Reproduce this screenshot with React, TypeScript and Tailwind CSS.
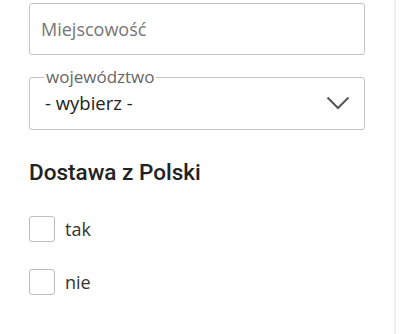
import { useState } from "react";

function Chevron() {
  return (
    <svg width="24" height="14" viewBox="0 0 24 14" fill="none" stroke="#555" strokeWidth={2}>
      <path d="M1.5 1.5 L12 12 L22.5 1.5" />
    </svg>
  );
}

function Check({ label }: { label: string }) {
  const [on, setOn] = useState(false);
  return (
    <label className="flex items-center gap-[10px] cursor-pointer select-none">
      <span
        onClick={() => setOn(!on)}
        className={`w-[26px] h-[26px] rounded-[3px] border border-[#bdbdbd] bg-white ${on ? "bg-[#333]" : ""}`}
      />
      <span className="text-[18px] text-[#333] leading-none">{label}</span>
    </label>
  );
}

export default function App() {
  return (
    <div
      className="w-[400px] h-[334px] bg-white flex overflow-hidden"
      style={{ fontFamily: '"Open Sans", sans-serif' }}
    >
      <div className="w-[336px] ml-[29px] pt-[3px] flex flex-col">
        {/* Miejscowość */}
        <input
          type="text"
          placeholder="Miejscowość"
          className="h-[52px] w-full rounded-[3px] border border-[#c4c4c4] px-[11px] text-[18px] text-[#222] placeholder-[#767676] outline-none"
        />

        {/* województwo */}
        <fieldset className="mt-[12px] h-[63px] rounded-[3px] border border-[#c4c4c4] pl-[15px] pr-[14px]">
          <legend className="px-[2px] text-[17px] text-[#666] leading-[20px] -ml-[1px]">województwo</legend>
          <div className="flex items-center justify-between h-[38px] -mt-[3px]">
            <span className="text-[18.5px] text-[#222]">- wybierz -</span>
            <Chevron />
          </div>
        </fieldset>

        {/* Dostawa z Polski */}
        <h3
          className="mt-[28px] text-[22.5px] font-medium text-[#222] leading-[28px]"
          style={{ fontFamily: "Roboto, sans-serif" }}
        >
          Dostawa z Polski
        </h3>

        <div className="mt-[30px] flex flex-col gap-[27px]">
          <Check label="tak" />
          <Check label="nie" />
        </div>
      </div>
      <div className="ml-auto mr-[4px] w-[2px] h-full bg-[#efefef]" />
    </div>
  );
}
